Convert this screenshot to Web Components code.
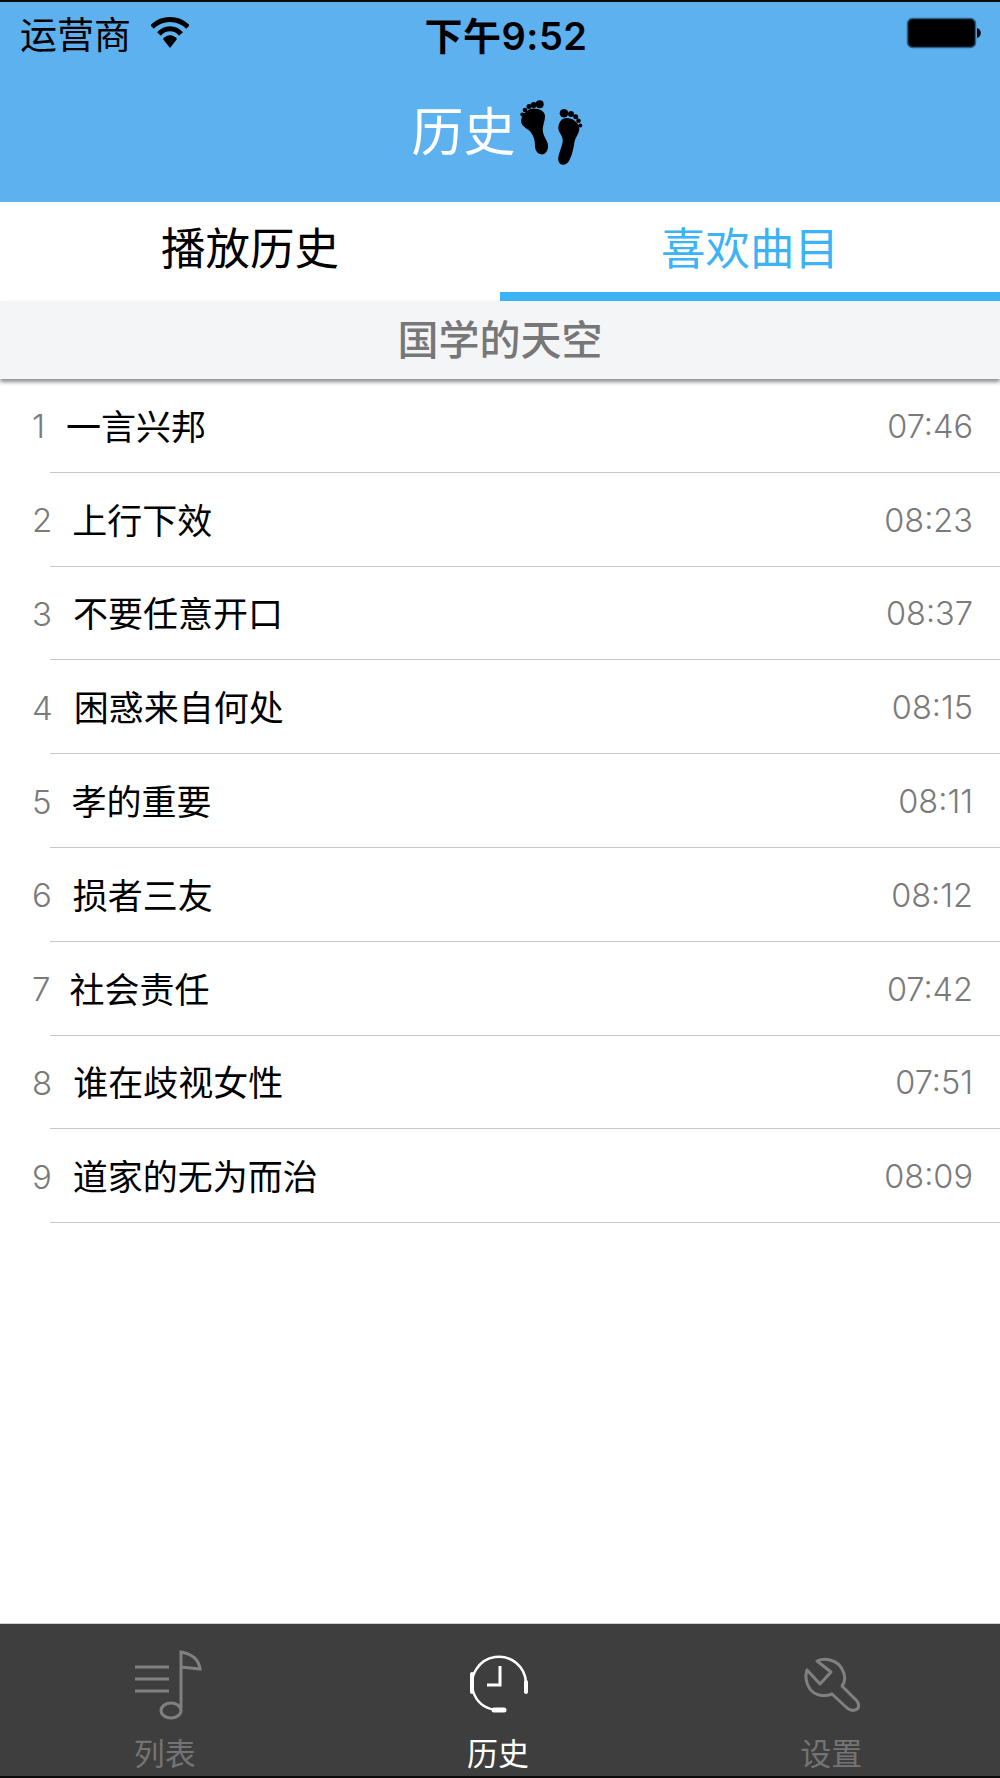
<!doctype html>
<html lang="zh">
  <head>
    <meta charset="UTF-8" />
    <title>历史</title>
    <style>
      html, body { margin: 0; height: 100%; background: #fff; }
      body { font-family: "Liberation Sans", "Noto Sans CJK SC", sans-serif; }
      app-shell { width: 1000px; height: 1778px; }
    </style>
  </head>
  <body>
    <app-shell>
      <status-bar carrier="运营商" time="下午9:52"></status-bar>
      <nav-title>历史</nav-title>
      <seg-tabs first="播放历史" second="喜欢曲目"></seg-tabs>
      <section-head>国学的天空</section-head>
      <track-list>
        <track-row num="1" gap="21" time="07:46">一言兴邦</track-row>
        <track-row num="2" gap="20" time="08:23">上行下效</track-row>
        <track-row num="3" gap="21" time="08:37">不要任意开口</track-row>
        <track-row num="4" gap="21" time="08:15">困惑来自何处</track-row>
        <track-row num="5" gap="20" time="08:11">孝的重要</track-row>
        <track-row num="6" gap="21" time="08:12">损者三友</track-row>
        <track-row num="7" gap="19" time="07:42">社会责任</track-row>
        <track-row num="8" gap="21" time="07:51">谁在歧视女性</track-row>
        <track-row num="9" gap="21" time="08:09">道家的无为而治</track-row>
      </track-list>
      <tab-bar>
        <tab-item label="列表">
          <svg width="80" height="70" viewBox="126 1648 80 70" fill="none" stroke="#808080" stroke-width="3">
            <path d="M134 1665H168M134 1677H168M134 1689H168" />
            <path d="M180 1706V1650C191 1652 198 1658 199 1667L180 1665" />
            <ellipse cx="170" cy="1708.500" rx="10" ry="7.500" />
          </svg>
        </tab-item>
        <tab-item label="历史" active>
          <svg width="80" height="70" viewBox="460 1648 80 70" fill="none" stroke="#fff" stroke-width="2.500">
            <path d="M526 1688V1681A27 27 0 1 0 473 1689C476 1699 484 1706 495 1708" />
            <path d="M472 1672V1690M526 1680V1690" stroke-width="4" stroke-linecap="round" />
            <path d="M494 1708H504" stroke-width="5" stroke-linecap="round" />
            <path d="M500 1664V1683H487" stroke-width="3" />
          </svg>
        </tab-item>
        <tab-item label="设置">
          <svg width="80" height="70" viewBox="793 1648 80 70" fill="none" stroke="#808080" stroke-width="3" stroke-linejoin="round">
            <path d="M817 1659C826 1655 838 1659 842 1667C846 1674 845 1680 842 1684L857 1699C860 1703 859 1707 855 1708C852 1709 849 1708 846 1705L832 1692C825 1695 815 1694 810 1687C806 1681 805 1674 807 1668L820 1682L831 1670Z" />
          </svg>
        </tab-item>
      </tab-bar>
    </app-shell>

    <script>
      class AppShell extends HTMLElement {
        constructor() {
          super();
          const shadow = this.attachShadow({ mode: "open" });
          shadow.innerHTML = `
            <style>
              :host { display: flex; flex-direction: column; overflow: hidden; }
            </style>
            <slot></slot>`;
        }
      }

      class StatusBar extends HTMLElement {
        constructor() {
          super();
          const shadow = this.attachShadow({ mode: "open" });
          shadow.innerHTML = `
            <style>
              :host {
                display: grid; grid-template-columns: 1fr auto 1fr; align-items: center;
                height: 64px; padding: 0 18px 0 20px; box-sizing: border-box;
                background: #5db1ee; border-top: 2px solid #0a0a0a; color: #000;
              }
              .left { display: flex; align-items: center; gap: 20px; font-size: 37px; }
              .time { font: 600 38px Inter, "Noto Sans CJK SC", sans-serif; letter-spacing: 0.500px; margin-left: 10px; }
              .right { display: flex; justify-content: flex-end; }
              svg { display: block; }
            </style>
            <div class="left">
              <span>${this.getAttribute("carrier")}</span>
              <svg width="38" height="32" viewBox="0 0 38 32">
                <path d="M1 10C11 0 27 0 37 10" fill="none" stroke="#000" stroke-width="5" />
                <path d="M8 17C14 10 24 10 30 17" fill="none" stroke="#000" stroke-width="5" />
                <path d="M12 22C16 17 22 17 26 22L19 31Z" fill="#000" />
              </svg>
            </div>
            <span class="time">${this.getAttribute("time")}</span>
            <div class="right">
              <svg width="76" height="32" viewBox="0 0 76 32">
                <rect x="1.500" y="1.500" width="68" height="29" rx="5" fill="#000" stroke="#2a5f88" stroke-width="1.500" />
                <path d="M71 11C76 12 76 20 71 21Z" fill="#000" />
              </svg>
            </div>`;
        }
      }

      class NavTitle extends HTMLElement {
        constructor() {
          super();
          const shadow = this.attachShadow({ mode: "open" });
          shadow.innerHTML = `
            <style>
              :host {
                display: flex; justify-content: center; align-items: flex-start;
                height: 138px; box-sizing: border-box; padding: 37px 6px 0 0;
                background: #5db1ee; color: #fff; font-size: 52px; line-height: 64px;
              }
              svg { display: block; margin: -1px -1px 0 4px; }
            </style>
            <slot></slot>
            <svg width="64" height="66" viewBox="0 0 64 66" fill="#000">
              <circle cx="19.700" cy="4.300" r="4" /><circle cx="13.700" cy="5" r="3" />
              <circle cx="9" cy="6.500" r="2.500" /><circle cx="5" cy="10" r="2.300" /><circle cx="2.300" cy="14.500" r="2" />
              <path d="M13 8.500C19 8 25 11 25 16C25 22 22 26 23 32C24 38 29 42 28 47.500C27 53 24 55 21 54.300C17 53.500 15 50 15 46C15 40 13.500 36 11 32.500C8 28.500 1.500 27 1.200 21.500C1 15 7 9 13 8.500Z" />
              <circle cx="44" cy="13.300" r="4.300" /><circle cx="51" cy="14" r="3" />
              <circle cx="55.700" cy="16.800" r="2.500" /><circle cx="58.500" cy="20.800" r="2.300" /><circle cx="60.300" cy="25.500" r="2" />
              <path d="M46.500 18C53 18 59.500 23 59.300 29C59 34 55.500 37 54.500 42C53.500 48 52.500 54 49.500 60C47 66 40 66.500 38.500 61C37 56 42 48 42.700 41C43 36 38 32 38.300 28C38.600 22 42 18 46.500 18Z" />
            </svg>`;
        }
      }

      class SegTabs extends HTMLElement {
        constructor() {
          super();
          const shadow = this.attachShadow({ mode: "open" });
          shadow.innerHTML = `
            <style>
              :host { display: grid; grid-template-columns: 1fr 1fr; height: 99px; background: #fff; font-size: 44.500px; }
              div { display: flex; justify-content: center; align-items: center; box-sizing: border-box; padding-top: 5px; padding-bottom: 18px; }
              .on { color: #3bb3f5; border-bottom: 9px solid #3bb3f5; padding-bottom: 9px; }
            </style>
            <div>${this.getAttribute("first")}</div>
            <div class="on">${this.getAttribute("second")}</div>`;
        }
      }

      class SectionHead extends HTMLElement {
        constructor() {
          super();
          const shadow = this.attachShadow({ mode: "open" });
          shadow.innerHTML = `
            <style>
              :host {
                display: flex; justify-content: center; align-items: center; box-sizing: border-box;
                height: 78px; padding-bottom: 6px; background: #f4f5f7; color: #777; font-size: 41px; font-weight: 500;
                box-shadow: 0 3px 4px rgba(0, 0, 0, 0.45); position: relative; z-index: 1;
              }
            </style>
            <slot></slot>`;
        }
      }

      class TrackList extends HTMLElement {
        constructor() {
          super();
          const shadow = this.attachShadow({ mode: "open" });
          shadow.innerHTML = `
            <style>
              :host { display: block; flex: 1; background: #fff; }
            </style>
            <slot></slot>`;
        }
      }

      class TrackRow extends HTMLElement {
        constructor() {
          super();
          const shadow = this.attachShadow({ mode: "open" });
          shadow.innerHTML = `
            <style>
              :host { display: block; height: 93.800px; box-sizing: border-box; padding-left: 32px; }
              .row { display: flex; align-items: center; height: 100%; padding-bottom: 3px; box-sizing: border-box; position: relative; }
              .row::after { content: ""; position: absolute; left: 18px; right: 0; bottom: 0; height: 1px; background: #c8c8c8; }
              .num { font: 300 33px Inter, sans-serif; color: #7a7a7a; margin-top: 4px; }
              .title { font-size: 35px; color: #000; margin-left: ${this.getAttribute("gap")}px; }
              .time { margin: 4px 27px 0 auto; font: 300 32.500px Inter, sans-serif; color: #7a7a7a; }
            </style>
            <div class="row">
              <span class="num">${this.getAttribute("num")}</span>
              <span class="title"><slot></slot></span>
              <span class="time">${this.getAttribute("time")}</span>
            </div>`;
        }
      }

      class TabBar extends HTMLElement {
        constructor() {
          super();
          const shadow = this.attachShadow({ mode: "open" });
          shadow.innerHTML = `
            <style>
              :host {
                display: grid; grid-template-columns: repeat(3, 1fr); height: 155px; box-sizing: border-box;
                background: #3e3e3e; border-top: 1px solid #cfcfcf; border-bottom: 2px solid #0a0a0a;
              }
            </style>
            <slot></slot>`;
        }
      }

      class TabItem extends HTMLElement {
        constructor() {
          super();
          const shadow = this.attachShadow({ mode: "open" });
          const color = this.hasAttribute("active") ? "#fff" : "#747474";
          shadow.innerHTML = `
            <style>
              :host { display: flex; flex-direction: column; align-items: center; padding-top: 26px; color: ${color}; font-size: 31px; line-height: 40px; }
              ::slotted(svg) { display: block; }
              span { margin: 15px 4px 0 0; }
            </style>
            <slot></slot>
            <span>${this.getAttribute("label")}</span>`;
        }
      }

      customElements.define("app-shell", AppShell);
      customElements.define("status-bar", StatusBar);
      customElements.define("nav-title", NavTitle);
      customElements.define("seg-tabs", SegTabs);
      customElements.define("section-head", SectionHead);
      customElements.define("track-list", TrackList);
      customElements.define("track-row", TrackRow);
      customElements.define("tab-bar", TabBar);
      customElements.define("tab-item", TabItem);
    </script>
  </body>
</html>
